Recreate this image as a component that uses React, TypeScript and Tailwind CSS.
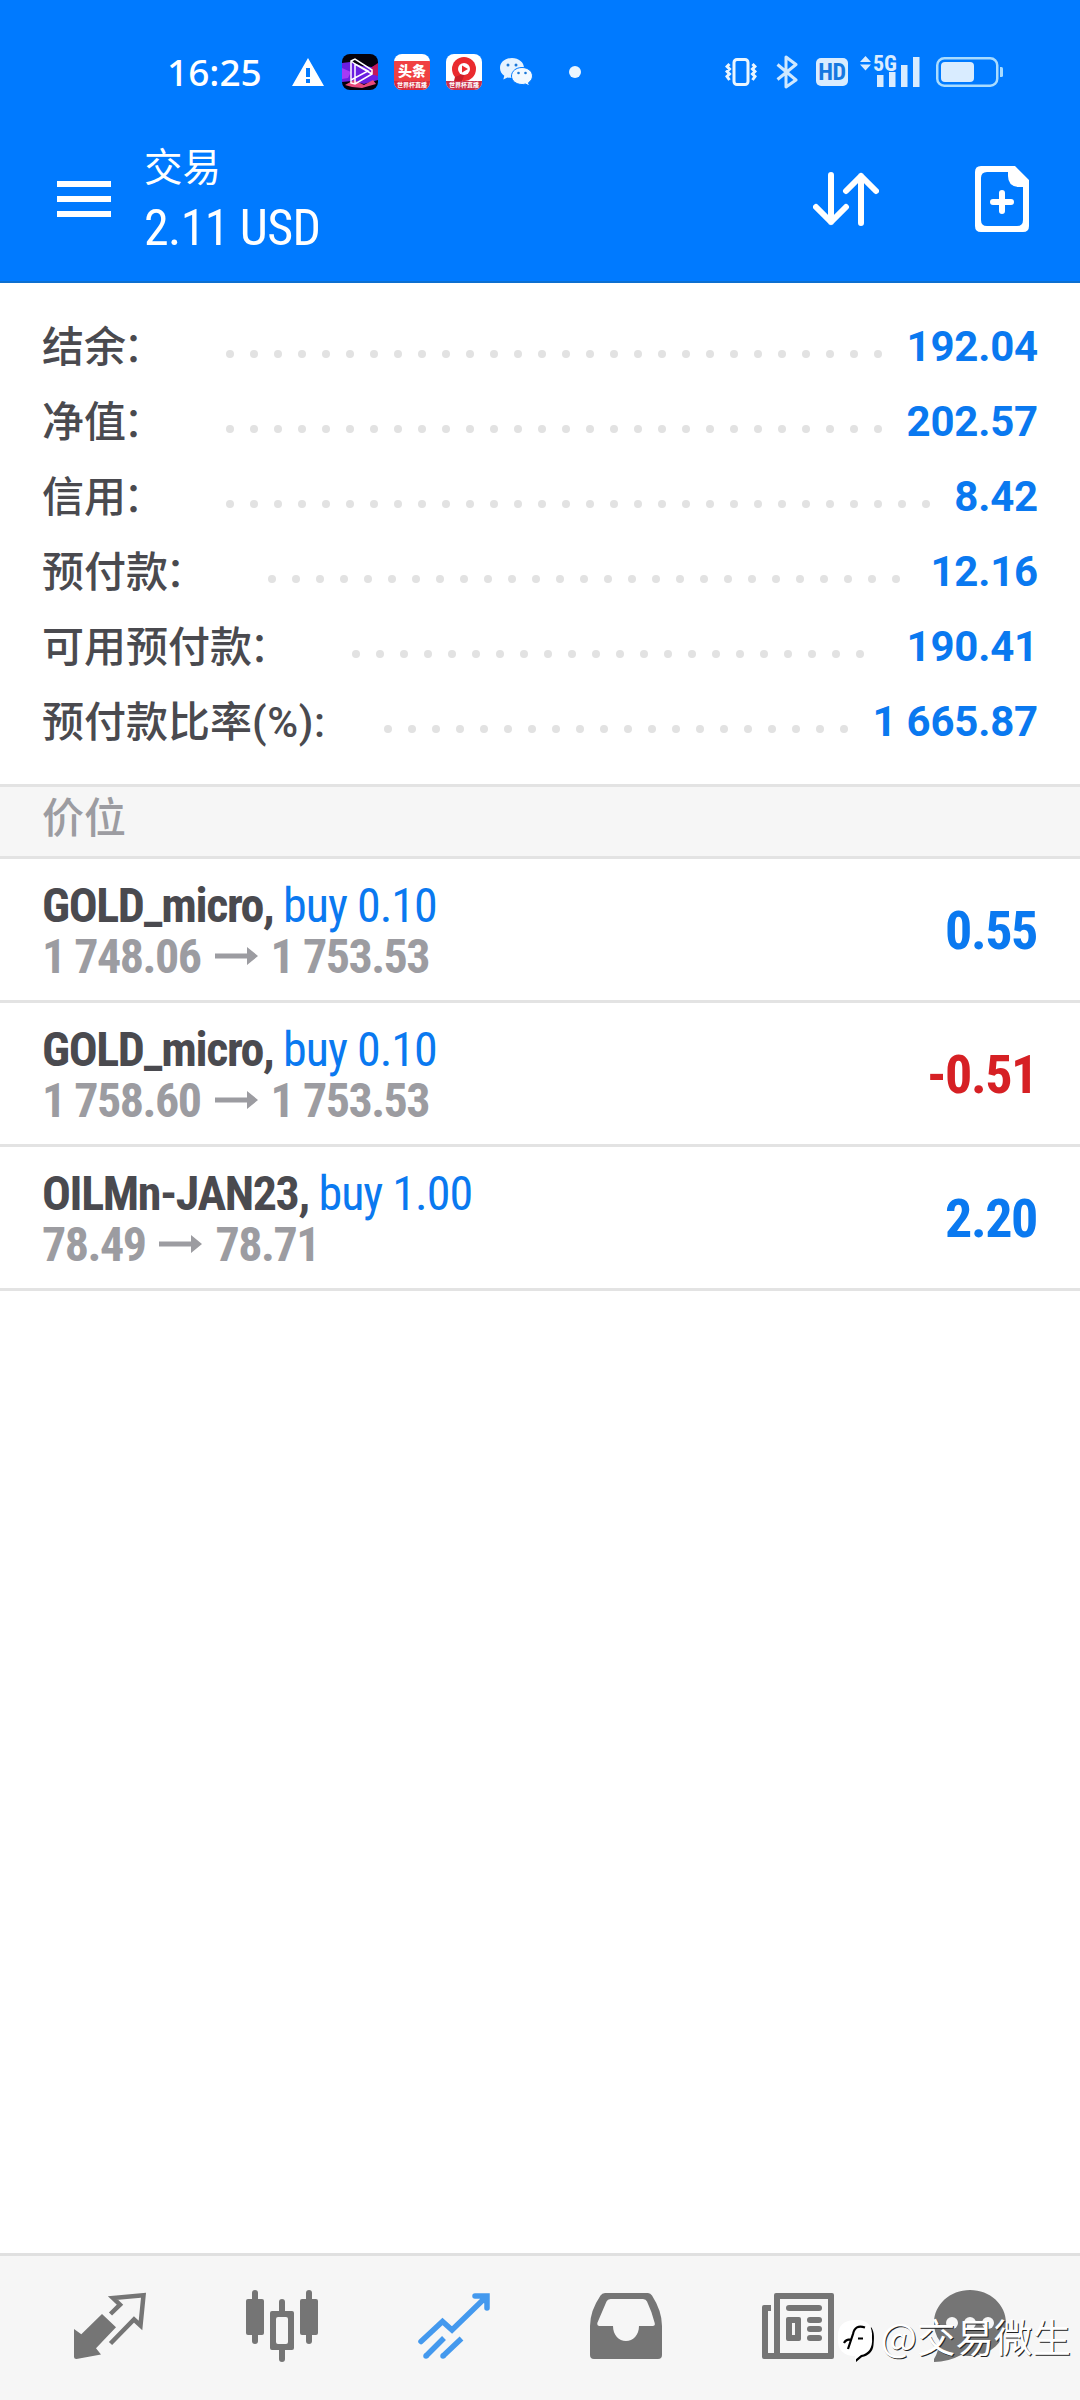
import type { ReactNode } from 'react';

const accountRows = [
  { label: '结余', colon: '：', value: '192.04', dots: 28 },
  { label: '净值', colon: '：', value: '202.57', dots: 28 },
  { label: '信用', colon: '：', value: '8.42', dots: 30 },
  { label: '预付款', colon: '：', value: '12.16', dots: 27 },
  { label: '可用预付款', colon: '：', value: '190.41', dots: 22 },
  { label: '预付款比率', suffix: '(%):', value: '1 665.87', dots: 20 },
];

const positions = [
  { symbol: 'GOLD_micro', side: 'buy 0.10', open: '1 748.06', current: '1 753.53', profit: '0.55' },
  { symbol: 'GOLD_micro', side: 'buy 0.10', open: '1 758.60', current: '1 753.53', profit: '-0.51' },
  { symbol: 'OILMn-JAN23', side: 'buy 1.00', open: '78.49', current: '78.71', profit: '2.20' },
];

function WarningIcon() {
  return (
    <svg className="ml-8 h-7 w-8" viewBox="0 0 32 28" fill="#fff">
      <path
        fillRule="evenodd"
        d="M16 0 32 28H0ZM14 10v9h4v-9ZM14 21v4h4v-4Z"
      />
    </svg>
  );
}

function VideoAppIcon() {
  return (
    <svg className="ml-[18px] h-9 w-9" viewBox="0 0 36 36">
      <defs>
        <clipPath id="videoClip">
          <rect width="36" height="36" rx="8" />
        </clipPath>
      </defs>
      <g clipPath="url(#videoClip)">
        <rect width="36" height="36" fill="#05020c" />
        <path d="M0 9 8 8 20 12 30 13 36 10V26L22 30 10 27 0 28Z" fill="#6a1fe0" />
        <path d="M0 14 9 18 6 24 0 25Z" fill="#a63bf5" />
        <path d="M30 13 36 9V22L28 20Z" fill="#c2185b" />
        <path d="M3 31 12 26 22 31 31 26 34 30 20 34 10 33Z" fill="#e84a7c" />
        <path
          d="M9 7 13 5 30 16V20L13 30 9 29ZM9 7 13 10V30M13 10 30 20M9 26 26 17 13 10"
          fill="none"
          stroke="#fff"
          strokeWidth="1.5"
        />
      </g>
    </svg>
  );
}

function NewsAppIcon() {
  return (
    <div className="ml-4 flex h-9 w-9 flex-col overflow-hidden rounded-[8px] bg-white pt-[7px] font-['Noto_Sans_CJK_SC',sans-serif]">
      <span className="h-[20px] bg-[#f04142] text-center text-[14px] leading-[19px] font-black text-white">头条</span>
      <span className="flex-1 bg-[#d62c3c] text-center text-[6px] leading-[8px] font-bold whitespace-nowrap text-white">世界杯直播</span>
    </div>
  );
}

function LiveAppIcon() {
  return (
    <div className="ml-4 flex h-9 w-9 flex-col overflow-hidden rounded-[8px] bg-white font-['Noto_Sans_CJK_SC',sans-serif]">
      <svg className="h-[27px] w-9" viewBox="0 0 36 27">
        <circle cx="18" cy="15" r="12" fill="#ea2a2e" />
        <path d="M9 23 19 19 16 27H8Z" fill="#c81e28" />
        <circle cx="18" cy="15" r="6" fill="#fff" />
        <path d="M16 11.5 22 15 16 18.5Z" fill="#ea2a2e" />
      </svg>
      <span className="flex-1 bg-[#c9304a] text-center text-[6px] leading-[8px] font-bold whitespace-nowrap text-white">世界杯直播</span>
    </div>
  );
}

function WechatIcon() {
  return (
    <svg className="ml-[18px] h-[28px] w-[33px]" viewBox="0 0 33 28">
      <path
        d="M12 0C5 0 0 4.4 0 10c0 3.2 1.6 6 4.3 7.8L3.3 21.5 7.5 19.4C9 19.8 10.5 20 12 20c6.7 0 12-4.4 12-10S18.7 0 12 0Z"
        fill="#e6f3ff"
      />
      <path
        d="M22 9.5c-6 0-10.5 3.8-10.5 8.5S16 26.5 22 26.5c1.2 0 2.4-.1 3.5-.5L29.5 28 28.5 24.7C31 23.1 32.5 20.7 32.5 18 32.5 13.3 28 9.5 22 9.5Z"
        fill="#f2f9ff"
        stroke="#007aff"
        strokeWidth="1"
      />
      <g fill="#1b78d8">
        <circle cx="8" cy="7" r="1.5" />
        <circle cx="16" cy="7" r="1.5" />
        <circle cx="18.5" cy="15" r="1.3" />
        <circle cx="25.5" cy="15" r="1.3" />
      </g>
    </svg>
  );
}

function StatusBar() {
  return (
    <div className="flex h-[144px] items-center pr-[77px] pl-[167px]">
      <span className="mb-0.5 w-[93px] font-['Noto_Sans',sans-serif] text-[37px] leading-none font-medium whitespace-nowrap text-white">
        16:25
      </span>
      <WarningIcon />
      <VideoAppIcon />
      <NewsAppIcon />
      <LiveAppIcon />
      <WechatIcon />
      <span className="ml-9 h-3 w-3 rounded-full bg-[#eaf6ff]" />
      <svg className="mr-px ml-auto h-[28px] w-[32px]" viewBox="0 0 32 28" fill="none" stroke="#eaf6ff">
        <rect x="9" y="1.5" width="14" height="25" rx="3" strokeWidth="3" />
        <path d="M4.5 6 2 8.5 4.5 11 2 13.5 4.5 16 2 18.5 4.5 22M27.5 6 30 8.5 27.5 11 30 13.5 27.5 16 30 18.5 27.5 22" strokeWidth="3" />
      </svg>
      <svg className="ml-[18px] h-[34px] w-[22px]" viewBox="0 0 22 34" fill="none" stroke="#cfe8ff" strokeWidth="3">
        <path d="M1.5 9.5 20 25 10 32V2L20 9.5 1.5 24.5" strokeLinejoin="round" />
      </svg>
      <span className="ml-[18px] flex h-[28px] w-[32px] items-center justify-center rounded-[5px] bg-[#d9ecff] font-[Roboto,sans-serif] text-[24px] leading-none font-bold tracking-[-0.5px] text-[#1678e0] [font-stretch:75%]">
        HD
      </span>
      <span className="relative ml-[12px] h-[34px] w-[60px]">
        <svg className="h-full w-full" viewBox="0 0 60 34" fill="#d9ecff">
          <path d="M0 7 5.5 1 11 7ZM0 9.5H11L5.5 15.5ZM17 20h6.5v12H17ZM29 17h6.5v15H29ZM41 10h6.5v22H41ZM53 2h6.5v30H53Z" />
        </svg>
        <span className="absolute top-[-2px] left-[13px] font-[Roboto,sans-serif] text-[22px] leading-[22px] font-bold text-[#d9ecff] [font-stretch:75%]">
          5G
        </span>
      </span>
      <svg className="ml-[16px] h-[30px] w-[67px]" viewBox="0 0 67 30">
        <rect x="1.25" y="1.25" width="60" height="27.5" rx="7" fill="none" stroke="#a9dcff" strokeWidth="2.5" />
        <rect x="5" y="5" width="33" height="20" rx="4" fill="#d9ecff" />
        <path d="M64 10h1.5q1.5 0 1.5 1.5v7q0 1.5-1.5 1.5H64Z" fill="#a9dcff" />
      </svg>
    </div>
  );
}

function TitleBar() {
  return (
    <div className="flex h-[137px] pr-[51px] pl-[57px] text-white">
      <button type="button" aria-label="Menu" className="mt-[37px] flex h-9 w-[54px] flex-col justify-between">
        <span className="h-1.5 w-full bg-white" />
        <span className="h-1.5 w-full bg-white" />
        <span className="h-1.5 w-full bg-white" />
      </button>
      <div className="ml-[33px] flex flex-col">
        <h1 className="h-11 font-['Noto_Sans_CJK_SC',sans-serif] text-[38.5px] leading-[41px]">交易</h1>
        <p className="mt-[11px] font-[Roboto,sans-serif] text-[50px] leading-[58px] tracking-[-0.6px] [font-stretch:75%]">
          2.11 USD
        </p>
      </div>
      <svg className="mt-[28px] ml-auto h-[54px] w-[66px]" viewBox="0 0 66 54" fill="none" stroke="#fff" strokeWidth="6" strokeLinecap="round" strokeLinejoin="round">
        <path d="M18 3V50M3 35 18 50 33 35M48 51V4M33 19 48 4 63 19" />
      </svg>
      <svg className="mt-[22px] ml-24 h-[66px] w-[54px]" viewBox="0 0 54 66">
        <path
          fillRule="evenodd"
          fill="#fff"
          d="M6 0H40L54 14V60q0 6-6 6H6q-6 0-6-6V6Q0 0 6 0ZM12 6Q6 6 6 12V54q0 6 6 6H42q6 0 6-6V21H43Q33 20 33 10V6Z"
        />
        <path d="M18 36H36M27 27V45" stroke="#fff" strokeWidth="6" strokeLinecap="round" />
      </svg>
    </div>
  );
}

function AccountRow({ label, colon, suffix, value, dots }: (typeof accountRows)[number]) {
  return (
    <div className="flex h-[75px] items-center">
      <span className="pt-0.5 font-[Roboto,'Noto_Sans_CJK_SC',sans-serif] text-[42px] leading-[73px] font-medium text-[#4a4a4f]">
        {label}
        {colon && <span className="mr-[3px] ml-[-3px] font-normal">{colon}</span>}
        {suffix && <span className="tracking-[0.6px]">{suffix}</span>}
      </span>
      <span className="mt-[15px] ml-[58px] flex gap-4">
        {Array.from({ length: dots }, (_, i) => (
          <span key={i} className="h-2 w-2 rounded-full bg-[#e2e2e2]" />
        ))}
      </span>
      <span className="ml-auto font-[Roboto,sans-serif] text-[42px] font-bold tracking-[-0.2px] text-[#0a79f0]">{value}</span>
    </div>
  );
}

function PositionRow({ symbol, side, open, current, profit }: (typeof positions)[number]) {
  return (
    <div className="flex h-[144px] items-center justify-between border-b-[3px] border-[#e3e3e3] px-[42px] font-[Roboto,sans-serif] [font-stretch:75%]">
      <div className="pt-0.5 text-[48px] leading-[51px]">
        <p>
          <span className="font-bold tracking-[-1.4px] text-[#4a4a4f]">{symbol}, </span>
          <span className="tracking-[-1px] text-[#0a79f0]">{side}</span>
        </p>
        <p className="flex items-center font-bold tracking-[-1.5px] text-[#9c9ca1]">
          {open}
          <svg className="mr-[13px] ml-[14px] h-[18px] w-[43px]" viewBox="0 0 43 18" fill="#9c9ca1">
            <path d="M0 6.5H32V0L43 9 32 18V11.5H0Z" />
          </svg>
          {current}
        </p>
      </div>
      <span
        className={`mr-px pt-0.5 text-[54px] leading-none font-bold tracking-[-1.4px] ${
          profit.startsWith('-') ? 'text-[#d62024]' : 'text-[#0a79f0]'
        }`}
      >
        {profit}
      </span>
    </div>
  );
}

function TabIcon({ label, active, children }: { label: string; active?: boolean; children: ReactNode }) {
  return (
    <button type="button" aria-label={label} className="flex w-[172px] justify-center">
      <svg className={`h-[72px] w-[72px] ${active ? 'text-[#4499ee]' : 'text-[#757575]'}`} viewBox="0 0 72 72" fill="currentColor">
        {children}
      </svg>
    </button>
  );
}

function TabBar() {
  return (
    <nav className="relative flex h-[147px] border-t-[3px] border-[#e0e0e0] bg-[#f6f6f6] px-6 pt-[34px]">
      <TabIcon label="Quotes">
        <path d="M0 39 7.3 44.3 28 24 42 37.3 22 58.3 27 64.5 2.5 69Q0 69 0 66.5Z" />
        <path d="M36.5 24 46 14.7 39 8 69.5 5.3 66.5 35.5 60 29.5 36.5 53.5" fill="none" stroke="currentColor" strokeWidth="4.5" />
      </TabIcon>
      <TabIcon label="Charts">
        <rect y="9" width="18" height="36" rx="2" />
        <rect x="6" width="6" height="54" rx="3" />
        <rect x="54" y="9" width="18" height="36" rx="2" />
        <rect x="60" width="6" height="54" rx="3" />
        <rect x="33" y="9" width="6" height="16" rx="3" />
        <rect x="33" y="56" width="6" height="16" rx="3" />
        <path fillRule="evenodd" d="M26 21H46q2 0 2 2V58q0 2-2 2H26q-2 0-2-2V23q0-2 2-2ZM32 27q-2 0-2 2V52q0 2 2 2h8q2 0 2-2V29q0-2-2-2Z" />
      </TabIcon>
      <TabIcon label="Trade" active>
        <path d="M3 51.5 24.5 31.5 34 40 68 7M57 6H69V18" fill="none" stroke="currentColor" strokeWidth="5.5" strokeLinecap="round" />
        <path d="M60 6H69V16Z" />
        <path d="M8 66 26 48M25 66 43.5 48.5" fill="none" stroke="currentColor" strokeWidth="5.5" />
        <circle cx="8" cy="66" r="2.75" />
        <circle cx="25" cy="66" r="2.75" />
      </TabIcon>
      <TabIcon label="History">
        <path
          fillRule="evenodd"
          d="M15 3H58Q60.5 3 62 5.5 72 21 72 36V65q0 4-4 4H4q-4 0-4-4V36Q0 21 10.5 5.5 12 3 15 3ZM20.5 9Q17.5 9 16.5 11.5L7.3 33Q7 36 9.5 36H23C23 45 29 51 36 51S49 45 49 36H62.5Q65.5 36 64.7 33 62 22 57 11.5 56 9 53 9Z"
        />
      </TabIcon>
      <TabIcon label="News">
        <path fillRule="evenodd" d="M14 3H70q2 0 2 2V67q0 2-2 2H2q-2 0-2-2V17q0-2 2-2H9V21H6V63H12V5q0-2 2-2ZM18 9V63H66V9Z" />
        <rect x="24" y="15" width="36" height="6" rx="3" />
        <path fillRule="evenodd" d="M26 27H37q2 0 2 2V49q0 2-2 2H26q-2 0-2-2V29q0-2 2-2ZM30 33V45H33V33Z" />
        <rect x="45" y="27" width="15" height="6" rx="3" />
        <rect x="45" y="36" width="15" height="6" rx="3" />
        <rect x="45" y="45" width="15" height="6" rx="3" />
      </TabIcon>
      <TabIcon label="Messages">
        <path d="M36 0C56 0 72 14.5 72 33S56 66 36 66Q31 66 27 65 14 72 0 72V69Q5 61 5.5 50.5 0 43 0 33C0 14.5 16 0 36 0Z" />
        <g fill="#f6f6f6">
          <circle cx="18" cy="33" r="6" />
          <circle cx="36" cy="33" r="6" />
          <circle cx="54" cy="33" r="6" />
        </g>
      </TabIcon>

      {/* author signature over the tab bar */}
      <div className="absolute top-[57px] right-[9px] flex items-start text-white">
        <svg className="mt-[6px] mr-[4px] h-[46px] w-[40px]" viewBox="0 0 40 46">
          <path d="M34 8C38 13 37 21 36.5 26 36 33 31 37 25 38L19 43 19 38Z" fill="#000" />
          <path d="M18 1C30 0 36 6 35 19 36 29 31 35 24 36L18 41V37C7 37 0 31 1 19 0 7 7 1 18 1Z" fill="#fff" />
          <path d="M28 8.5Q18 5 16 15L11 30M7 24Q9 20 15 20.500M21 19.500H26" fill="none" stroke="#000" strokeWidth="2.2" />
        </svg>
        <span className="font-['Noto_Sans_CJK_SC',sans-serif] text-[38.5px] leading-[44px] whitespace-nowrap [text-shadow:1px_1px_0_#222]">
          @交易微生
        </span>
      </div>
    </nav>
  );
}

export default function App() {
  return (
    <div className="flex h-[2400px] w-[1080px] flex-col overflow-hidden bg-white">
      <header className="h-[283px] border-b-2 border-[#0d6fd0] bg-[#007aff]">
        <StatusBar />
        <TitleBar />
      </header>

      <section className="h-[501px] px-[42px] pt-[26px]">
        {accountRows.map((row) => (
          <AccountRow key={row.label} {...row} />
        ))}
      </section>

      <h2 className="h-[75px] border-y-[3px] border-[#e3e3e3] bg-[#f6f6f6] px-[42px] font-['Noto_Sans_CJK_SC',sans-serif] text-[42px] leading-[56px] font-medium text-[#9c9ca1]">
        价位
      </h2>

      <main className="flex-1">
        {positions.map((position) => (
          <PositionRow key={position.symbol + position.open} {...position} />
        ))}
      </main>

      <TabBar />
    </div>
  );
}
